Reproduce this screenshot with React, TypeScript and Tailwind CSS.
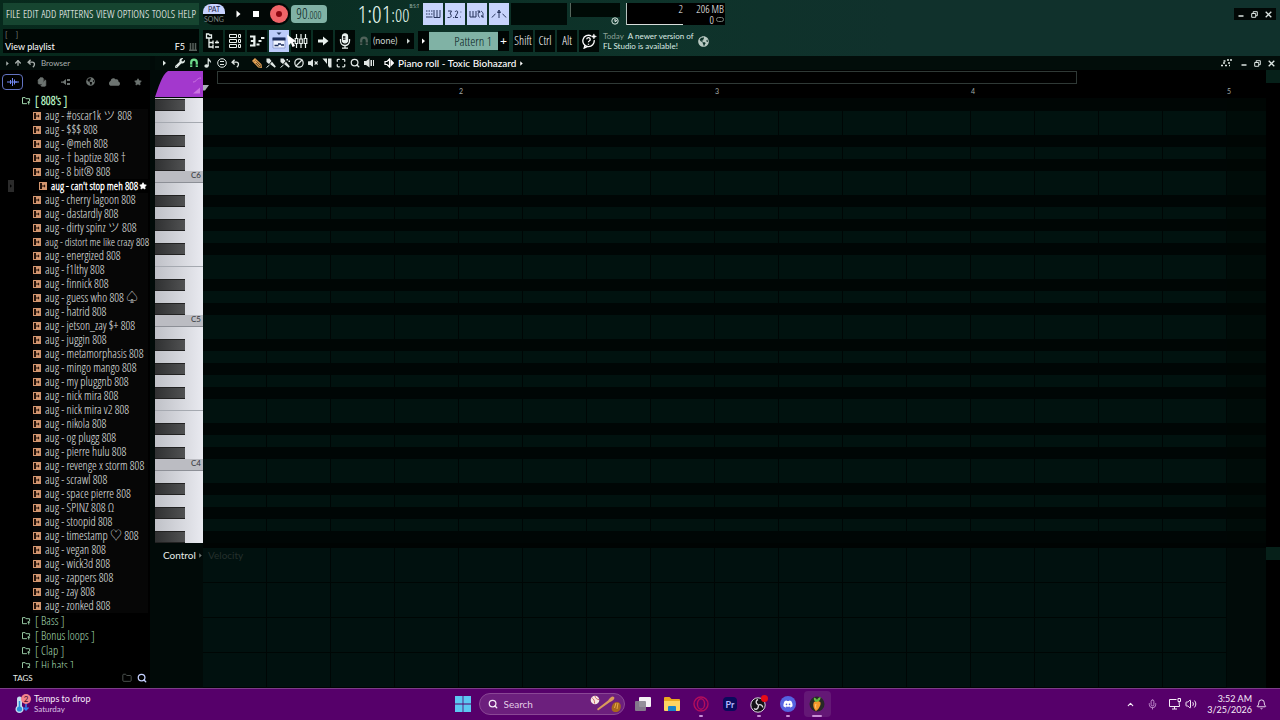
import React from 'react';
import {
  ArrowUp,
  Ban,
  Bell,
  ChevronUp,
  Files,
  Folder,
  Maximize,
  Mic,
  Monitor,
  Search,
  Star,
  Volume2,
} from 'lucide-react';
import { FaCloud, FaDiscord, FaGlobeAmericas, FaVolumeMute, FaWrench } from 'react-icons/fa';

const menus = ['FILE', 'EDIT', 'ADD', 'PATTERNS', 'VIEW', 'OPTIONS', 'TOOLS', 'HELP'];

const samples = [
  '#oscar1k ツ 808', '$$$ 808', '@meh 808', '† baptize 808 †', '8 bit® 808', "can't stop meh 808",
  'cherry lagoon 808', 'dastardly 808', 'dirty spinz ツ 808', 'distort me like crazy 808',
  'energized 808', 'f1lthy 808', 'finnick 808', 'guess who 808 ♤', 'hatrid 808', 'jetson_zay $+ 808',
  'juggin 808', 'metamorphasis 808', 'mingo mango 808', 'my pluggnb 808', 'nick mira 808',
  'nick mira v2 808', 'nikola 808', 'og plugg 808', 'pierre hulu 808', 'revenge x storm 808',
  'scrawl 808', 'space pierre 808', 'SPINZ 808 Ω', 'stoopid 808', 'timestamp ♡ 808', 'vegan 808',
  'wick3d 808', 'zappers 808', 'zay 808', 'zonked 808',
];

const folders = ['Bass', 'Bonus loops', 'Clap', 'Hi hats'];

// Notes from F#6 down to F#3
const noteNames = ['C', 'C#', 'D', 'D#', 'E', 'F', 'F#', 'G', 'G#', 'A', 'A#', 'B'];
const notes = Array.from({ length: 37 }, (_, i) => {
  const n = 78 - i;
  return { name: noteNames[n % 12], octave: Math.floor(n / 12) };
});

type IconProps = { className?: string };

const Caret: React.FC<IconProps> = ({ className = 'h-2 w-1' }) => (
  <svg viewBox="0 0 4 8" className={className} fill="currentColor">
    <path d="M0 0.5 4 4 0 7.5Z" />
  </svg>
);

const BrowserTreeIcon = () => (
  <svg viewBox="0 0 16 16" className="h-4 w-4" fill="none" stroke="currentColor" strokeWidth="1.3">
    <path d="M1.5 1v4h5V2H4.5L3.8 1ZM4 5v9h4M4 9.5h4M8 7.5v4M8 12v3.5M10 9.5h4M10 14h4M12 7.5v3" />
  </svg>
);

const ChannelRackIcon = () => (
  <svg viewBox="0 0 16 16" className="h-4 w-4" fill="none" stroke="currentColor">
    <path d="M2.500 1.500h7v3h-7ZM2.500 6.500h7v3h-7ZM2.500 11.500h7v3h-7ZM11.500 1.500h2v3h-2ZM11.500 6.500h2v3h-2ZM11.500 11.500h2v3h-2Z" />
  </svg>
);

const PianoRollIcon = () => (
  <svg viewBox="0 0 16 16" className="h-4 w-4" fill="currentColor">
    <path d="M1 2.500h5.500v11H1v-2h3.200V9H1.800V7h2.400V4.500H1ZM7.500 10.500h3v2h-3ZM9.500 7h3v2h-3ZM12 4h3.400v2H12Z" />
  </svg>
);

const PlaylistIcon = () => (
  <svg viewBox="0 0 16 18" className="h-[18px] w-4">
    <path d="M5.500 0.500h5L8 3Z" fill="#27385e" />
    <path d="M2 6h12v10H2Z" fill="#f0f4ff" stroke="#8f9fd0" />
    <path d="M1.500 5.500h13v3h-13Z" fill="#1b2c5c" />
    <path d="M3.500 13.500h4M7 12h3M10 13h3" fill="none" stroke="#1b2c5c" strokeWidth="1.500" />
  </svg>
);

const MixerIcon = () => (
  <svg viewBox="0 0 16 16" className="h-4 w-4" fill="none" stroke="currentColor" strokeWidth="1.2">
    <path d="M3.500 1v4M3.500 11v4M8 1v5M8 11v4M12.500 1v4M12.500 11v4" />
    <path d="M2.200 5.500h2.600v5H2.200ZM6.700 6h2.600v4.500H6.700ZM11.200 5.500h2.600v5h-2.600Z" />
  </svg>
);

const ArrowIcon = () => (
  <svg viewBox="0 0 16 16" className="h-4 w-4" fill="currentColor">
    <path d="M3 6.500h5V3.500L13.500 8 8 12.500v-3H3Z" />
  </svg>
);

const MicIcon = () => (
  <svg viewBox="0 0 16 16" className="h-4 w-4" fill="none" stroke="currentColor" strokeWidth="1.3">
    <rect x="5.5" y="0.8" width="5" height="9" rx="2.5" fill="currentColor" />
    <path d="M3.5 6v2a4.5 4.5 0 0 0 9 0V6M8 12.5V15M5 15.2h6" />
    <path d="M6 4h2.4M6 6.2h2.4" stroke="#000" />
  </svg>
);

const HelpIcon = () => (
  <svg viewBox="0 0 18 18" className="h-4 w-4" fill="none" stroke="currentColor" strokeWidth="1.5">
    <path d="M11.5 3.3A6.4 6.4 0 1 0 14.8 8M4.5 13.5 3.6 17l4-1.8" />
    <path d="M6.4 7a2 2 0 1 1 2.8 2c-.8.3-.8.8-.8 1.5M8.4 12v1.2" />
    <path d="m14.5 1 .9 2 2 .9-2 .9-.9 2-.9-2-2-.9 2-.9Z" fill="currentColor" strokeWidth="0.5" />
  </svg>
);

const FolderIcon = () => (
  <svg viewBox="0 0 10 9" className="h-2 w-[9px] shrink-0" fill="none" stroke="currentColor">
    <path d="M5.5 7.5h-5V.7h3l.9 1.2h4.1v2.6M6 5.8h3M7.5 4.5v4" />
  </svg>
);

const SampleIcon = () => (
  <svg viewBox="0 0 8 8" className="h-2 w-2 shrink-0">
    <path d="M0 0h8v8H0Z" fill="#d3966f" />
    <path d="M1 1h2v6H1ZM5 2.200 6.500 4 5 5.800Z" fill="#24120a" />
    <path d="M3 4h2" stroke="#24120a" fill="none" />
  </svg>
);

const SpeakerIcon = () => (
  <svg viewBox="0 0 10 10" className="h-[10px] w-[10px]" fill="none" stroke="currentColor" strokeWidth="1.2">
    <path d="M1 3.5h2L5.5 1v8L3 6.5H1Z" />
    <path d="M7 2.5 9.5 5 7 7.5Z" fill="currentColor" />
  </svg>
);

const UndoIcon = () => (
  <svg viewBox="0 0 10 10" className="h-[9px] w-[9px]" fill="none" stroke="currentColor" strokeWidth="1.5">
    <path d="M4 0.800 1.200 3.500 4 6.200M1.500 3.500h4.500c3 0 3 4 .5 5.500" />
  </svg>
);

const MagnetIcon: React.FC<IconProps> = ({ className = '' }) => (
  <svg viewBox="0 0 10 10" className={`h-[10px] w-[10px] ${className}`} fill="none" stroke="currentColor">
    <path d="M2.200 9V4.500a2.800 2.800 0 0 1 5.600 0V9" strokeWidth="2.2" />
    <path d="M.8 7h2.800M6.400 7h2.800" stroke="#03150f" strokeWidth="0.7" />
  </svg>
);

const NoteIcon = () => (
  <svg viewBox="0 0 10 10" className="h-[10px] w-[10px]" fill="currentColor">
    <ellipse cx="3.5" cy="8" rx="2.2" ry="1.7" />
    <path d="M4.600.3h1.200c.2 1.700 3 2 2.200 5-.5-1.300-1.200-1.800-2.200-2V8H4.600Z" />
  </svg>
);

const PencilIcon = () => (
  <svg viewBox="0 0 10 10" className="h-[10px] w-[10px]" fill="none" stroke="currentColor" strokeWidth="1.1">
    <path d="M.8 3 3 .8 9 6.500l.3 2.800L6.500 9ZM2 2l6 6M4.500 2.500 2.500 4.500" />
  </svg>
);

const BrushIcon: React.FC<{ dotted?: boolean }> = ({ dotted }) => (
  <svg viewBox="0 0 10 10" className="h-[10px] w-[10px]" fill="currentColor">
    <path d="M0.500 0.500 3.500.5l2 2.500-2.500 3L.5 4ZM4 6l2-2.300L9.800 8.500l-1 1.200Z" />
    <path d="m0.500 9.500 3-2.500" stroke="currentColor" />
    {dotted && <path d="M6.500 1H8v1.500H6.500ZM8.500 2.500H10V4H8.500Z" />}
  </svg>
);

const SliceIcon = () => (
  <svg viewBox="0 0 10 10" className="h-[10px] w-[10px]" fill="currentColor">
    <path d="M0.500 0.500H5v5.500ZM6 .5h3.500v9H7L6 7.500Z" />
  </svg>
);

const WindowsLogo = () => (
  <svg viewBox="0 0 16 16" className="h-4 w-4" fill="#5cc8f2">
    <path d="M0 0h7.600v7.600H0ZM8.400 0H16v7.600H8.400ZM0 8.400h7.600V16H0ZM8.400 8.400H16V16H8.400Z" />
  </svg>
);

const BaseballArt = () => (
  <svg viewBox="0 0 32 18" className="h-[18px] w-8 shrink-0">
    <circle cx="5" cy="5" r="4.3" fill="#f5e7e3" />
    <path d="M2.200 3c1.500 1 2.400 2.500 2.400 5.500M5 1c.3 2 1.600 3.300 4 3.600" stroke="#c54848" fill="none" strokeWidth="0.8" />
    <path d="M7 14 18 5.500C20.500 2 22.500 .5 24 2c1.200 1.500-.5 3.500-4 5L8 15.500Z" fill="#d99a5b" />
    <path d="M22 11c1-3 3-4 5-4 3 0 4.500 3 3.500 6.500-1 3-3.500 4-6 3.500s-3.500-3-2.500-6Z" fill="#a8671d" />
    <path d="M24.500 13 26 8M27 14l1-6" stroke="#e8aa4b" />
  </svg>
);

const TaskViewIcon = () => (
  <svg viewBox="0 0 18 16" className="h-4 w-[18px]">
    <rect x="5" y="1" width="12" height="10" rx="1" fill="#f4f1f5" />
    <rect x="1" y="5" width="11" height="10" rx="1" fill="#8a8590" opacity="0.9" />
  </svg>
);

const ExplorerIcon = () => (
  <svg viewBox="0 0 18 16" className="h-4 w-[18px]">
    <path d="M1 2a1 1 0 0 1 1-1h4.500l2 2H16a1 1 0 0 1 1 1v10H1Z" fill="#e9a820" />
    <path d="M1 5h16v9a1 1 0 0 1-1 1H2a1 1 0 0 1-1-1Z" fill="#fcd462" />
    <path d="M5 15v-4a1 1 0 0 1 1-1h6a1 1 0 0 1 1 1v4Z" fill="#1683c9" />
  </svg>
);

const OperaIcon = () => (
  <svg viewBox="0 0 16 16" className="h-4 w-4" fill="none" stroke="#b30d5c">
    <circle cx="8" cy="8" r="7" strokeWidth="1.4" />
    <ellipse cx="8" cy="8" rx="3.6" ry="5.2" strokeWidth="1.4" />
  </svg>
);

const ObsIcon = () => (
  <svg viewBox="0 0 18 18" className="h-[18px] w-[18px]">
    <circle cx="8" cy="10" r="7.2" fill="#151217" stroke="#dcd6de" />
    <g fill="none" stroke="#dcd6de" strokeWidth="1.4">
      <path d="M8 4.500c-2.500 1-2.500 4 0 5.200M12.800 12.500c-.3-2.600-3-3.800-4.800-2M4 13.500c2 1.600 4.600.2 4.400-3" />
    </g>
    <circle cx="14.5" cy="3.5" r="3.5" fill="#e80c17" />
  </svg>
);

const FruityIcon = () => (
  <svg viewBox="0 0 16 16" className="h-4 w-4">
    <circle cx="8" cy="8" r="7.5" fill="#272a26" />
    <path d="M5 6C7 4.500 10 4.500 11.500 6.500c.5 3-2 7-4.500 8.500C4.500 13 3.500 8.500 5 6Z" fill="#f6982a" />
    <path d="M7.500 6C5 5.500 4.500 3.500 5 1.500c1.700.5 2.300 1 3 2.500.5-1.500 1.500-2.500 3.500-3C11.800 3.500 10.500 5.500 7.500 6Z" fill="#66bd45" />
    <path d="M7 8c-.6 1.500-.5 3 0 4.500" stroke="#ffd083" fill="none" />
  </svg>
);

const WeatherIcon = () => (
  <svg viewBox="0 0 18 20" className="h-5 w-[18px]">
    <path d="M3 5a2.500 2.500 0 0 1 5 0v7a4 4 0 1 1-5 0Z" fill="#c4dcf0" />
    <circle cx="5.5" cy="15" r="2.6" fill="#2a94dc" />
    <path d="M5.500 7v8" stroke="#2a94dc" strokeWidth="1.5" />
    <path d="M12 9v7m-2.500-2.500L12 16l2.500-2.500" stroke="#2f7ff0" strokeWidth="1.5" fill="none" />
    <circle cx="12" cy="5" r="5" fill="#f4828d" />
    <text x="12" y="8" fontSize="8" textAnchor="middle" fill="#3c0d28" fontFamily="Lato">2</text>
  </svg>
);

const DisplayIcon = () => (
  <svg viewBox="0 0 12 12" className="h-3 w-3" fill="none" stroke="currentColor">
    <path d="M7.500 1.500h-7v7h10V7M3 11h5M5.500 8.500V11M9 .5h2.500v3H9ZM10.200 3.500V7" />
  </svg>
);

const CursorIcon = () => (
  <svg viewBox="0 0 10 14" className="absolute -right-2 top-1 z-10 h-[14px] w-[10px]">
    <path d="M0 0.500 9.500 7.500 6 8l2 4-2.500 1L4 9 1.500 11.500Z" fill="#fff" />
  </svg>
);

const modeIcons = [
  {
    label: 'Typing keyboard',
    art: <path d="M1 4h1.500M3.500 4H5M6 4h1.500M1 7h1.500M3.500 7H5M6 7h1.500M1 10h6.500M9 3v7.500h6V3M12 3v7" />,
  },
  {
    label: 'Countdown',
    art: <path d="M1 4h3.500L3 7c2 0 1.500 3.500-.5 3.500H.5M6 10.500h.8M8 5c1-2 3.500-1 2.500 1L8 10.500h3M13.500 5h.8M13 10h.8" />,
  },
  {
    label: 'Blend notes',
    art: <path d="M1 4v6h6V4M4 4v6M10.500 4c-2 2-1.500 5 0 6.500M13 10c2-2 1-5-1-6M8.500 4h2.200v2M15 10h-2.200V8" />,
  },
  {
    label: 'Loop recording',
    art: <path d="M1 10.500c1-1.500 2-2.500 3.500-3.500M8 4v7M6.500 5.500 8 3l1.500 2.500ZM11.500 7c1.500 1 2.500 2 3.500 3.500" />,
  },
];

const viewButtons = [
  { label: 'View browser', icon: <BrowserTreeIcon /> },
  { label: 'View channel rack', icon: <ChannelRackIcon /> },
  { label: 'View piano roll', icon: <PianoRollIcon /> },
  { label: 'View playlist', icon: <PlaylistIcon />, active: true },
  { label: 'View mixer', icon: <MixerIcon /> },
  { label: 'Step edit', icon: <ArrowIcon /> },
  { label: 'Record audio', icon: <MicIcon /> },
];

const WindowButtons: React.FC<IconProps> = ({ className = '' }) => (
  <div className={`flex items-center gap-[7px] text-[#dde5e2] ${className}`}>
    <button aria-label="Minimize">
      <svg viewBox="0 0 6 6" className="h-[6px] w-[6px]"><path d="M0.500 5h5" stroke="currentColor" strokeWidth="1.5" /></svg>
    </button>
    <button aria-label="Restore">
      <svg viewBox="0 0 7 7" className="h-[7px] w-[7px]" fill="none" stroke="currentColor">
        <path d="M.7 2.500h4v3.800h-4ZM2.200 2.300V.7h4.100v4H5" />
      </svg>
    </button>
    <button aria-label="Close">
      <svg viewBox="0 0 7 7" className="h-[7px] w-[7px]"><path d="m.7.7 5.600 5.600M6.300.7.7 6.300" stroke="currentColor" strokeWidth="1.3" /></svg>
    </button>
  </div>
);

const Header = () => (
  <header className="flex h-14 shrink-0 bg-linear-to-r from-[#07291c] via-[#0e332a] to-[#10312c] to-70%">
    <div className="flex w-[203px] shrink-0 flex-col gap-1 py-[3px] pl-[3px] pr-1">
      <nav className="flex h-[22px] items-center justify-between bg-[#164530] px-[3px] font-narrow text-[11px] text-white">
        {menus.map((menu) => (
          <button key={menu}>{menu}</button>
        ))}
      </nav>
      <div className="flex h-6 items-end justify-between bg-[#000705] px-[2px] text-[9px] text-white">
        <div>
          <div className="text-[8px] leading-[10px] text-[#748079]">[&nbsp; &nbsp; ]</div>
          <div className="leading-[13px]">View playlist</div>
        </div>
        <div className="flex items-center gap-1 leading-[13px]">
          F5
          <svg viewBox="0 0 8 8" className="h-2 w-2" stroke="#56605b" strokeWidth="1.5">
            <path d="M1.500 0v7M4 0v7M6.500 0v7M0 7.300h8" />
          </svg>
        </div>
      </div>
    </div>

    <div className="flex flex-col gap-1 py-[3px]">
      <div className="flex h-[22px] items-center">
        <div className="flex h-full w-[87px] items-center justify-between rounded-full bg-[#020806] pr-[2px]">
          <div className="w-[22px] text-center text-[7px] leading-[10px]">
            <button className="block w-full rounded-t-lg bg-[#c9d3ff] text-[#1d2747]">PAT</button>
            <button className="block w-full text-[#7c8782]">SONG</button>
          </div>
          <button aria-label="Play" className="text-white"><Caret className="h-2 w-[5px]" /></button>
          <button aria-label="Stop" className="h-[6px] w-[6px] bg-white" />
          <button aria-label="Record" className="flex h-[18px] w-[18px] items-center justify-center rounded-full bg-[#ef6468]">
            <span className="h-[6px] w-[6px] rounded-full bg-[#8b0711]" />
          </button>
        </div>
        <div className="ml-px flex h-[18px] w-9 items-baseline justify-center rounded-sm bg-[#80b2a5] font-narrow text-sm leading-[18px] text-[#06201a]">
          90<span className="text-[10px]">.000</span>
        </div>
        <div className="flex h-[22px] w-24 items-start justify-end pr-1 font-narrow leading-[22px] text-[#e4f8ee]">
          <span className="text-2xl leading-[22px]">1:01</span>
          <span className="pt-px text-lg leading-[22px]">:00</span>
          <span className="text-[6px] leading-[6px]">B:S:T</span>
        </div>
        <div className="flex gap-[2px]">
          {modeIcons.map(({ label, art }) => (
            <button key={label} aria-label={label} className="flex h-[22px] w-5 items-center justify-center bg-[#c7d4fc] text-[#26345c]">
              <svg viewBox="0 0 16 14" className="h-[14px] w-4" fill="none" stroke="currentColor">
                {art}
              </svg>
            </button>
          ))}
        </div>
        <div className="ml-[2px] h-[22px] w-14 bg-[#000c08]" />
        <div className="relative ml-[3px] mb-2 h-[14px] w-[50px] border-l border-[#56675d] bg-[#000a06]">
          <svg viewBox="0 0 8 8" className="absolute -bottom-2 right-px h-2 w-2">
            <circle cx="4" cy="4" r="3.2" fill="#173f35" stroke="#d5e5de" />
            <path d="M4 2v2.500l2-1" stroke="#fff" fill="none" />
          </svg>
        </div>
        <div className="ml-[6px] flex h-[22px] w-[99px] border-l border-[#b6c2be] bg-black pr-px font-narrow text-[11px] leading-[11px] text-white">
          <div className="flex w-14 flex-col justify-between text-right">
            <span>2</span>
            <span className="h-px w-14 bg-[#d8dedb]" />
          </div>
          <div className="grow whitespace-nowrap text-right">
            <div>206 MB</div>
            <div className="flex items-center justify-end gap-[2px]">
              0 <span className="h-[5px] w-2 rounded-full border border-[#748079]" />
            </div>
          </div>
        </div>
      </div>

      <div className="flex h-6 items-center">
        <div className="flex gap-[2px]">
          {viewButtons.map(({ label, icon, active }) => (
            <button
              key={label}
              aria-label={label}
              className={`relative flex h-[22px] w-5 items-center justify-center text-[#e9f1ee] ${
                active ? 'bg-[#bccbfa]' : 'bg-[#000805]'
              }`}
            >
              {icon}
              {active && <CursorIcon />}
            </button>
          ))}
        </div>
        <MagnetIcon className="ml-1 text-[#51635b]" />
        <div className="relative ml-[2px] flex h-4 w-[43px] items-center bg-[#000604] text-[#c9d3cf]">
          <select aria-label="Snap" className="w-full appearance-none pl-[2px] text-[9px]">
            <option>(none)</option>
          </select>
          <Caret className="pointer-events-none absolute right-1 h-[6px] w-[3px]" />
        </div>
        <button aria-label="Pattern menu" className="ml-1 flex h-5 w-[11px] items-center justify-center bg-[#000604] text-white">
          <Caret className="h-[6px] w-[3px]" />
        </button>
        <button className="h-[18px] w-[69px] bg-[#80b2a5] pr-[6px] text-right font-narrow text-[13px] leading-[18px] text-[#06201a]">
          Pattern 1
        </button>
        <button aria-label="Add pattern" className="flex h-5 w-[11px] items-center justify-center bg-[#000604] text-xs text-white">
          +
        </button>
        <div className="ml-1 flex gap-[2px] font-narrow text-xs text-white">
          <button className="h-[22px] w-5 bg-[#000805]">Shift</button>
          <button className="h-[22px] w-5 bg-[#000805]">Ctrl</button>
          <button className="h-[22px] w-5 bg-[#000805]">Alt</button>
          <button aria-label="Help" className="flex h-[22px] w-5 items-center justify-center bg-[#000805]">
            <HelpIcon />
          </button>
        </div>
        <div className="ml-1 w-[95px] whitespace-nowrap text-[8px] leading-[10px] text-[#dcebe4]">
          <div>
            <span className="mr-1 text-[#8ba097]">Today</span>A newer version of
          </div>
          <div>FL Studio is available!</div>
        </div>
        <a href="#news" aria-label="News" className="text-[#b9c9c2]">
          <FaGlobeAmericas className="h-[11px] w-[11px]" />
        </a>
      </div>
    </div>

    <WindowButtons className="mr-1 mt-2 ml-auto h-3 bg-[#020806] px-1" />
  </header>
);

const Browser = () => (
  <aside className="flex w-[150px] shrink-0 flex-col bg-black">
    <div className="flex h-[14px] shrink-0 items-center gap-[5px] bg-[#020d0a] pl-[6px] text-[8px] text-[#a9b1ae]">
      <Caret className="h-[5px] w-[3px]" />
      <ArrowUp className="h-2 w-2" strokeWidth={4} />
      <UndoIcon />
      <span>Browser</span>
    </div>
    <div className="flex h-[23px] shrink-0 items-center justify-between pl-[2px] pr-2 text-[#6d7471]">
      <button aria-label="All" className="flex h-4 w-[21px] items-center justify-center rounded-sm border border-[#6272c0] text-[#7186f2]">
        <svg viewBox="0 0 12 8" className="h-2 w-3" stroke="currentColor">
          <path d="M0 4h12M3.500 2v4M5.500 0v8M7.500 1.500v5M9 3v2" />
        </svg>
      </button>
      <button aria-label="Project"><Files className="h-[10px] w-[10px] -scale-x-100" fill="currentColor" /></button>
      <button aria-label="Plugins">
        <svg viewBox="0 0 10 8" className="h-2 w-[10px]" fill="currentColor">
          <path d="M0 3.500h2L5 1v6L2 4.800H0ZM6 1h3v2H6ZM6 5h3v2H6Z" />
        </svg>
      </button>
      <button aria-label="Online"><FaGlobeAmericas className="h-[9px] w-[9px]" /></button>
      <button aria-label="Cloud"><FaCloud className="h-[10px] w-[11px]" /></button>
      <button aria-label="Starred"><Star className="h-2 w-2" fill="currentColor" /></button>
    </div>
    <ul className="min-h-0 grow overflow-hidden font-narrow text-[#e2e5e4]">
      <li className="flex h-4 items-center gap-1 pl-[22px] text-xs text-[#b5f0c2] font-strong">
        <FolderIcon /> [ 808's ]
      </li>
      {samples.map((sample) =>
        sample.startsWith("can't") ? (
          <li key={sample} className="flex h-[14px] items-center whitespace-nowrap pl-2 text-[11px] font-strong text-white">
            <span className="flex h-3 w-[6px] items-center justify-center bg-[#2b2b2b] text-black">
              <Caret className="h-1 w-[2px]" />
            </span>
            <span className="flex items-center gap-1 pl-[25px]"><SampleIcon /> aug - {sample}</span>
            <Star className="ml-px h-2 w-2 shrink-0" fill="currentColor" />
          </li>
        ) : (
          <li
            key={sample}
            className={`ml-[33px] mr-[2px] flex h-[14px] items-center gap-1 whitespace-nowrap bg-[#060606] ${
              sample.length > 20 ? 'text-[11px]' : 'text-xs'
            }`}
          >
            <SampleIcon /> aug - {sample}
          </li>
        ),
      )}
      {folders.map((folder) => (
        <li key={folder} className="flex h-[15px] items-center gap-1 pl-[22px] text-xs text-[#a6dcb3]">
          <FolderIcon /> [ {folder} ]
        </li>
      ))}
    </ul>
    <div className="flex h-5 shrink-0 items-center pl-[13px] pr-[3px] text-[8px] text-[#e8edeb]">
      TAGS
      <Folder className="ml-auto h-[10px] w-[10px] text-[#59605d]" />
      <button aria-label="Search tags" className="ml-[5px]"><Search className="h-[10px] w-[10px] text-[#c5d0ff]" strokeWidth={3} /></button>
    </div>
  </aside>
);

const RollToolbar = () => (
  <div className="flex h-[14px] shrink-0 items-center bg-[#020d0a] pl-2 text-[#dfe7e4]">
    <div className="flex items-center gap-1">
      <button aria-label="Options" className="mr-[5px]"><Caret className="h-[6px] w-[3px]" /></button>
      <button aria-label="Tools"><FaWrench className="h-[10px] w-[10px]" /></button>
      <button aria-label="Snap"><MagnetIcon className="text-[#6fdc8c]" /></button>
      <button aria-label="Stamp"><NoteIcon /></button>
      <button aria-label="Quantize">
        <svg viewBox="0 0 10 10" className="h-[10px] w-[10px]" fill="none" stroke="currentColor">
          <circle cx="5" cy="5" r="4.3" /><path d="M3 3.500h4M3 6.500h4" />
        </svg>
      </button>
      <button aria-label="Undo"><UndoIcon /></button>
    </div>
    <div className="ml-3 flex items-center gap-1">
      <button aria-label="Draw" className="text-[#e6a355]"><PencilIcon /></button>
      <button aria-label="Paint"><BrushIcon /></button>
      <button aria-label="Paint sequence"><BrushIcon dotted /></button>
      <button aria-label="Delete"><Ban className="h-[10px] w-[10px] rotate-90" strokeWidth={3} /></button>
      <button aria-label="Mute"><FaVolumeMute className="h-[10px] w-[10px]" /></button>
      <button aria-label="Slice"><SliceIcon /></button>
      <button aria-label="Select"><Maximize className="h-[10px] w-[10px]" strokeWidth={3} /></button>
      <button aria-label="Zoom"><Search className="h-[10px] w-[10px]" strokeWidth={3} /></button>
      <button aria-label="Playback">
        <svg viewBox="0 0 10 10" className="h-[10px] w-[10px]" fill="currentColor">
          <path d="M0 3h2L5.500.5v9L2 7H0ZM6.500 2H8v6H6.500ZM9 2h1v6H9Z" />
        </svg>
      </button>
    </div>
    <button className="ml-[10px] flex items-center gap-1 whitespace-nowrap text-[10px] font-medium leading-[14px] text-white">
      <SpeakerIcon />
      Piano roll - Toxic Biohazard
      <Caret className="h-[5px] w-[3px]" />
    </button>
    <svg viewBox="0 0 12 8" className="ml-auto mr-2 h-2 w-3" stroke="currentColor" strokeWidth="1.3">
      <path d="M2.500 2h2M6 1h2M9 1h2M2 4h2M7 4h2M0 6.500h2M4 6.500h2M8 6.500h1" />
    </svg>
    <WindowButtons className="mr-[5px]" />
  </div>
);

const Keyboard = () => (
  <div className="flex w-12 shrink-0 flex-col bg-linear-to-r from-[#bfc1c7] to-[#e9eaf0] pt-px">
    {notes.map(({ name, octave }) => {
      const black = name.includes('#');
      return (
        <div
          key={name + octave}
          className={`flex h-3 shrink-0 items-start ${
            name === 'C' ? 'border-b border-[#8c8f96] bg-[#bbbcc2]' : name === 'F' ? 'border-b border-[#a5a9b0]' : ''
          }`}
        >
          {black && <span className="h-3 w-[30px] border-y border-[#222] bg-linear-to-r from-[#303132] to-[#505152]" />}
          {name === 'C' && (
            <span className="ml-auto pr-[2px] text-[8px] leading-2 text-[#33363b]">
              C{octave}
            </span>
          )}
        </div>
      );
    })}
  </div>
);

const PianoRoll = () => (
  <main className="flex min-w-0 grow flex-col bg-[#010a08] pl-[5px]">
    <RollToolbar />
    <div className="flex min-h-0 grow overflow-hidden">
      <div className="flex w-12 shrink-0 flex-col">
        <svg viewBox="0 0 48 28" className="h-7 w-12 shrink-0">
          <path d="M13 1h35v26H0C3 19 7 4 13 1Z" fill="#a338cd" />
          <path d="M38 12c4 0 3-4 8-4" fill="none" stroke="#cb73e3" />
          <path d="M38 23.500l7-6v6Z" fill="#cb73e3" />
        </svg>
        <Keyboard />
        <button className="flex items-center gap-[3px] whitespace-nowrap py-[5px] pl-2 text-[10px] leading-[15px] text-[#e6edea]">
          Control <Caret className="h-[5px] w-[3px] shrink-0 text-[#727b78]" />
        </button>
      </div>

      <div className="flex min-w-0 grow flex-col">
        <div className="flex h-[15px] shrink-0 items-center bg-black pl-[14px] pr-[189px]">
          <div className="h-[13px] grow border border-[#2f3936]" />
        </div>
        <div className="relative flex h-[13px] shrink-0 bg-black text-[7px] leading-[13px] text-[#a3aba8]">
          <svg viewBox="0 0 7 6" className="absolute top-0 left-0 h-[6px] w-[7px]" fill="#a9b0b7">
            <path d="M0 0h6L2 5.500H0Z" />
          </svg>
          {['', '2', '3', '4', '5'].map((bar) => (
            <span key={bar} className="w-64 shrink-0">{bar}</span>
          ))}
        </div>
        <div className="relative shrink-0 bg-[#000605] pt-px">
          {notes.map(({ name, octave }) => (
            <div key={name + octave} className={name.includes('#') ? 'h-3 bg-[#000605]' : 'h-3 bg-[#01120f]'} />
          ))}
          <div className="absolute inset-y-0 left-0 right-[39px] bg-[repeating-linear-gradient(90deg,transparent_0_63px,#000605_63px_64px)]" />
          <div className="absolute inset-y-0 right-0 w-[39px] bg-[#00050480]" />
        </div>
        <div className="h-[5px] shrink-0 bg-[#000403]" />
        <div className="flex min-h-0 grow bg-[#010b09]">
          <div className="grow bg-[#01110f]">
            <div className="h-full bg-[repeating-linear-gradient(90deg,transparent_0_63px,#000605_63px_64px),repeating-linear-gradient(180deg,transparent_0_34px,#000604_34px_35px)] pl-[5px] text-[10px] leading-[15px] text-[#25302d]">
              Velocity
            </div>
          </div>
          <div className="w-[39px]" />
        </div>
      </div>

      <div className="flex w-[14px] shrink-0 flex-col bg-black">
        <div className="h-[13px] bg-[#062019]" />
        <div className="mt-[464px] h-[13px] bg-[#062019]" />
      </div>
    </div>
  </main>
);

type TaskbarAppProps = {
  label: string;
  running?: boolean;
  active?: boolean;
  children: React.ReactNode;
};

const TaskbarApp: React.FC<TaskbarAppProps> = ({ label, running, active, children }) => (
  <button
    aria-label={label}
    className={`relative mx-px flex h-[26px] w-[27px] items-center justify-center rounded-sm ${active ? 'bg-[#641876]' : ''}`}
  >
    {children}
    {running && (
      <span className={`absolute bottom-0 h-[2px] rounded-full bg-[#c98fd6] ${active ? 'w-[10px]' : 'w-1'}`} />
    )}
  </button>
);

const Taskbar = () => (
  <footer className="grid h-8 shrink-0 grid-cols-[1fr_auto_1fr] items-center border-t border-[#7c3d88] bg-[#56006a] pb-px text-[9px] leading-[11px] text-[#f6ecf8]">
    <button className="flex items-center gap-[2px] pl-[14px] text-left">
      <WeatherIcon />
      <span>
        <span className="block">Temps to drop</span>
        <span className="block text-[8px] text-[#dcc0e4]">Saturday</span>
      </span>
    </button>
    <div className="flex items-center pl-[6px]">
      <button aria-label="Start"><WindowsLogo /></button>
      <label className="ml-2 flex h-[22px] w-[146px] items-center gap-[6px] rounded-full border border-[#8a4795] bg-[#6c1f7d] pl-2 pr-[2px]">
        <Search className="h-[10px] w-[10px] shrink-0" strokeWidth={3} />
        <input type="text" aria-label="Search" placeholder="Search" className="w-0 grow text-[10px] placeholder:text-[#e2cce8]" />
        <BaseballArt />
      </label>
      <div className="ml-1 flex items-center">
        <TaskbarApp label="Task view"><TaskViewIcon /></TaskbarApp>
        <TaskbarApp label="File Explorer"><ExplorerIcon /></TaskbarApp>
        <TaskbarApp label="Opera GX" running><OperaIcon /></TaskbarApp>
        <TaskbarApp label="Premiere Pro">
          <span className="flex h-[14px] w-[14px] items-center justify-center rounded-sm bg-[#0a0a5c] text-[9px] font-bold text-[#b5b5ff]">
            Pr
          </span>
        </TaskbarApp>
        <TaskbarApp label="OBS Studio" running><ObsIcon /></TaskbarApp>
        <TaskbarApp label="Discord" running>
          <span className="flex h-4 w-4 items-center justify-center rounded-full bg-[#5562e0] text-white">
            <FaDiscord className="h-[10px] w-[10px]" />
          </span>
        </TaskbarApp>
        <TaskbarApp label="FL Studio" running active><FruityIcon /></TaskbarApp>
      </div>
    </div>
    <div className="flex items-center justify-end pr-[13px]">
      <button aria-label="Hidden icons"><ChevronUp className="h-[9px] w-[9px]" strokeWidth={3} /></button>
      <button aria-label="Microphone" className="ml-3"><Mic className="h-[11px] w-[11px] text-[#c795d2]" /></button>
      <button aria-label="Network" className="ml-[11px]"><DisplayIcon /></button>
      <button aria-label="Volume" className="ml-1"><Volume2 className="h-3 w-3" /></button>
      <div className="ml-[10px] text-right">
        <div>3:52 AM</div>
        <div>3/25/2026</div>
      </div>
      <button aria-label="Notifications" className="ml-1"><Bell className="h-[11px] w-[11px]" /></button>
    </div>
  </footer>
);

const App: React.FC = () => {
  return (
    <div className="flex h-screen flex-col overflow-hidden bg-black font-[Lato,'Noto_Sans_CJK_JP',sans-serif] [&_.font-narrow]:font-['Open_Sans_Condensed_Light','Open_Sans_Condensed','Liberation_Sans_Narrow','Noto_Sans_CJK_JP',sans-serif] [&_.font-narrow]:font-light [&_.font-strong]:font-bold">
      <Header />
      <div className="flex min-h-0 grow">
        <Browser />
        <PianoRoll />
      </div>
      <Taskbar />
    </div>
  );
};

export default App;
